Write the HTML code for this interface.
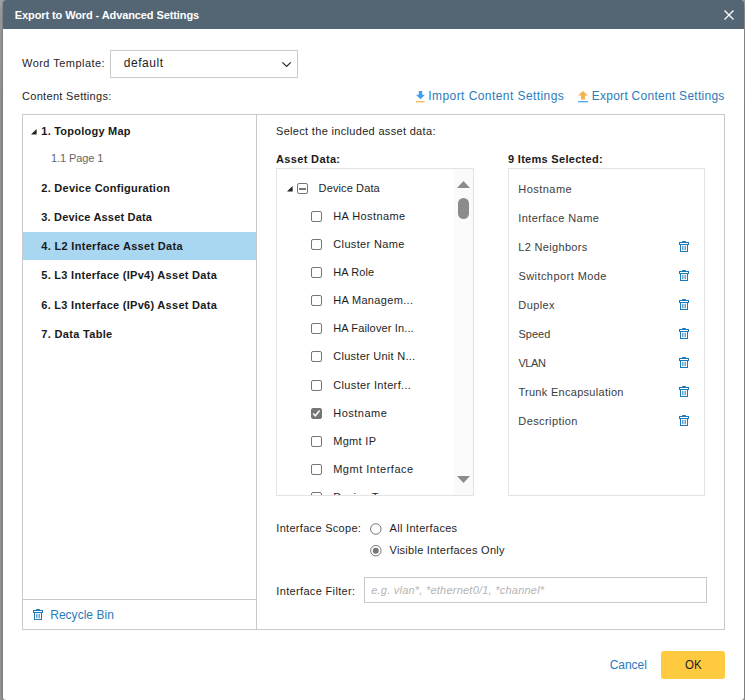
<!DOCTYPE html>
<html lang="en">
<head>
<meta charset="utf-8">
<title>Export to Word - Advanced Settings</title>
<style>
*{box-sizing:border-box}
html,body{margin:0;padding:0}
body{width:745px;height:700px;overflow:hidden;position:relative;background:linear-gradient(#a1a4a5 0,#a1a4a5 7px,#999c9e 8px,#95999a 30px,#8f9394 110px,#8f9394 100%);font-family:"Liberation Sans",sans-serif;font-size:11px;color:#1e1e1e}
ul,li,h1,h2,p{margin:0;padding:0;list-style:none;font-weight:400}
a{text-decoration:none;cursor:pointer}
button{margin:0;padding:0;border:0;font-family:inherit;cursor:pointer}
.a{position:absolute}
.t{position:absolute;height:20px;line-height:20px;white-space:pre;transform-origin:0 50%}
.dlg{left:3px;top:0;width:741px;height:700px;background:#fff;border-radius:3px;box-shadow:0 0 3px rgba(0,0,0,.38);overflow:hidden}
.hdr{left:0;top:0;width:741px;height:29px;background:#546673}
.panel{left:22px;top:114px;width:703px;height:516px;border:1px solid #c9c9c9;background:#fff}
.vdiv{left:256px;top:115px;width:1px;height:514px;background:#c9c9c9}
.hdiv{left:23px;top:599px;width:233px;height:1px;background:#c9c9c9}
.hl{left:23px;top:232px;width:233px;height:28px;background:#a9d6f0}
.sel{left:110px;top:50px;width:188px;height:28px;border:1px solid #c9c9c9;background:#fff}
.box{border:1px solid #e3e3e3;background:#fff}
.track{left:454px;top:169px;width:19px;height:326px;background:#fafafa}
.thumb{left:458px;top:198px;width:11px;height:21px;border-radius:6px;background:#8b8b8b}
.cb{width:11px;height:11px;border:1px solid #767676;border-radius:2px;background:#fff}
.cb.on{background:#767676}
.inp{left:364px;top:577px;width:343px;height:26px;border:1px solid #c9c9c9;background:#fff}
.ok{left:661px;top:651px;width:64px;height:28px;border-radius:3px;background:#ffc940}
.clipbox{left:277px;top:169px;width:177px;height:326px;overflow:hidden}
svg{position:absolute;overflow:visible}
</style>
</head>
<body>
<!-- modal dialog shell -->
<div class="a dlg" role="dialog"><div class="a hdr"></div></div>
<!-- title bar -->
<header>
<h1 class="t" style="left:14.8px;top:5.0px;font-size:11px;color:#fff;font-weight:700;letter-spacing:-0.10px">Export to Word - Advanced Settings</h1>
<svg style="left:724px;top:10px" width="10" height="10" viewBox="0 0 10 10"><path d="M0.5 0.5l9 9M9.5 0.5l-9 9" stroke="#fff" stroke-width="1.3" fill="none"/></svg>
</header>
<!-- template selector + import / export links -->
<section>
<label class="t" style="left:22.0px;top:53.0px;font-size:11px;color:#1e1e1e;letter-spacing:0.46px">Word Template:</label>
<div class="a sel"></div>
<span class="t" style="left:123.7px;top:53.0px;font-size:12px;color:#222;letter-spacing:0.57px">default</span>
<svg style="left:281px;top:62px" width="11" height="6" viewBox="0 0 11 6"><path d="M1.4 0.35L5.6 4.45 9.8 0.35" stroke="#2a2a2a" stroke-width="1.3" fill="none"/></svg>
<label class="t" style="left:22.0px;top:86.0px;font-size:11px;color:#1e1e1e;letter-spacing:0.31px">Content Settings:</label>
<svg style="left:416px;top:91px" width="9" height="12" viewBox="0 0 9 12"><path d="M2.8 0h3.4v3.8H9L4.5 8.3 0 3.8h2.8z" fill="#3f9ff0"/><rect x="0" y="10.1" width="8.6" height="1.2" fill="#f6b04a"/></svg>
<a class="t" style="left:428.3px;top:86.0px;font-size:12px;color:#2b7bba;letter-spacing:0.43px">Import Content Settings</a>
<svg style="left:578px;top:91px" width="10" height="12" viewBox="0 0 10 12"><path d="M5 0l5 4.6H7v3.9H3V4.6H0z" fill="#f7b250"/><rect x="0" y="10.1" width="10" height="1.2" fill="#3f9ff0"/></svg>
<a class="t" style="left:591.7px;top:86.0px;font-size:12px;color:#2b7bba;letter-spacing:0.27px">Export Content Settings</a>
</section>
<!-- content settings panel -->
<div class="a panel"></div><div class="a vdiv"></div><div class="a hdiv"></div><div class="a hl"></div>
<!-- left: content tree -->
<nav><ul>
<svg style="left:30.5px;top:128.5px" width="5.6" height="5.6" viewBox="0 0 5 5"><path d="M5 0v5H0z" fill="#222"/></svg>
<li class="t" style="left:41.3px;top:121.0px;font-size:11px;color:#1a1a1a;font-weight:700;letter-spacing:0.23px">1. Topology Map</li>
<li class="t" style="left:51.0px;top:148.0px;font-size:11px;color:#666;letter-spacing:-0.08px">1.1 Page 1</li>
<li class="t" style="left:41.3px;top:178.0px;font-size:11px;color:#1a1a1a;font-weight:700;letter-spacing:0.26px">2. Device Configuration</li>
<li class="t" style="left:41.3px;top:207.0px;font-size:11px;color:#1a1a1a;font-weight:700;letter-spacing:0.18px">3. Device Asset Data</li>
<li class="t" style="left:41.3px;top:236.0px;font-size:11px;color:#1a1a1a;font-weight:700;letter-spacing:0.31px">4. L2 Interface Asset Data</li>
<li class="t" style="left:41.3px;top:265.0px;font-size:11px;color:#1a1a1a;font-weight:700;letter-spacing:0.28px">5. L3 Interface (IPv4) Asset Data</li>
<li class="t" style="left:41.3px;top:295.0px;font-size:11px;color:#1a1a1a;font-weight:700;letter-spacing:0.28px">6. L3 Interface (IPv6) Asset Data</li>
<li class="t" style="left:41.3px;top:324.0px;font-size:11px;color:#1a1a1a;font-weight:700;letter-spacing:0.32px">7. Data Table</li>
</ul>
<svg style="left:33px;top:609px" width="10" height="11" viewBox="0 0 10 11"><path d="M3.2 0.6h3.6" stroke="#1b78b9" stroke-width="1.2" fill="none"/><rect x="0.5" y="1.5" width="9" height="2" fill="none" stroke="#1b78b9" stroke-width="1"/><rect x="1.5" y="3.5" width="7" height="7" fill="none" stroke="#1b78b9" stroke-width="1"/><path d="M3.5 4.8v4.4M5 4.8v4.4M6.5 4.8v4.4" stroke="#1b78b9" stroke-width="0.9" opacity=".75" fill="none"/></svg>
<a class="t" style="left:50.2px;top:605.0px;font-size:12px;color:#2b7bba;letter-spacing:0.03px">Recycle Bin</a>
</nav>
<!-- middle: asset data tree with checkboxes -->
<section>
<p class="t" style="left:276.0px;top:121.0px;font-size:11px;color:#1e1e1e;letter-spacing:0.32px">Select the included asset data<span>:</span></p>
<h2 class="t" style="left:276.0px;top:149.0px;font-size:11px;color:#1a1a1a;font-weight:700;letter-spacing:0.35px">Asset Data<span>:</span></h2>
<div class="a box" style="left:276px;top:168px;width:198px;height:328px"></div>
<div class="a track"></div><div class="a thumb"></div>
<svg style="left:457px;top:181px" width="13" height="7" viewBox="0 0 13 7"><path d="M6.5 0L13 7H0z" fill="#8b8b8b"/></svg>
<svg style="left:457px;top:476px" width="13" height="7" viewBox="0 0 13 7"><path d="M0 0h13L6.5 7z" fill="#8b8b8b"/></svg>
<svg style="left:286.5px;top:185.5px" width="5.6" height="5.6" viewBox="0 0 5 5"><path d="M5 0v5H0z" fill="#222"/></svg>
<ul class="a clipbox">
<span class="a cb" style="left:20px;top:14px"><i class="a" style="left:1px;top:4px;width:7px;height:2px;background:#767676"></i></span><li class="t" style="left:41.6px;top:9.0px;font-size:11px;color:#1e1e1e;letter-spacing:0.12px">Device Data</li>
<span class="a cb" style="left:34px;top:42px"></span><li class="t" style="left:56.2px;top:37.0px;font-size:11px;color:#1e1e1e;letter-spacing:0.41px">HA Hostname</li>
<span class="a cb" style="left:34px;top:70px"></span><li class="t" style="left:56.3px;top:65.0px;font-size:11px;color:#1e1e1e;letter-spacing:0.35px">Cluster Name</li>
<span class="a cb" style="left:34px;top:98px"></span><li class="t" style="left:56.2px;top:93.0px;font-size:11px;color:#1e1e1e;letter-spacing:0.08px">HA Role</li>
<span class="a cb" style="left:34px;top:126px"></span><li class="t" style="left:56.2px;top:121.0px;font-size:11px;color:#1e1e1e;letter-spacing:0.33px">HA Managem...</li>
<span class="a cb" style="left:34px;top:154px"></span><li class="t" style="left:56.2px;top:149.0px;font-size:11px;color:#1e1e1e;letter-spacing:0.14px">HA Failover In...</li>
<span class="a cb" style="left:34px;top:182px"></span><li class="t" style="left:56.3px;top:177.0px;font-size:11px;color:#1e1e1e;letter-spacing:0.26px">Cluster Unit N...</li>
<span class="a cb" style="left:34px;top:211px"></span><li class="t" style="left:56.3px;top:206.0px;font-size:11px;color:#1e1e1e;letter-spacing:0.34px">Cluster Interf...</li>
<span class="a cb on" style="left:34px;top:239px"><svg style="left:0;top:0" width="9" height="9" viewBox="0 0 9 9"><path d="M1.2 4.6l2.1 2.2L7.6 1.6" stroke="#fff" stroke-width="1.5" fill="none"/></svg></span><li class="t" style="left:56.2px;top:234.0px;font-size:11px;color:#1e1e1e;letter-spacing:0.51px">Hostname</li>
<span class="a cb" style="left:34px;top:267px"></span><li class="t" style="left:56.2px;top:262.0px;font-size:11px;color:#1e1e1e;letter-spacing:0.32px">Mgmt IP</li>
<span class="a cb" style="left:34px;top:295px"></span><li class="t" style="left:56.2px;top:290.0px;font-size:11px;color:#1e1e1e;letter-spacing:0.51px">Mgmt Interface</li>
<span class="a cb" style="left:34px;top:323px"></span><li class="t" style="left:56.2px;top:318.0px;font-size:11px;color:#1e1e1e;letter-spacing:0.28px">Device Type</li>
</ul>
</section>
<!-- right: selected items -->
<section>
<h2 class="t" style="left:508.0px;top:149.0px;font-size:11px;color:#1a1a1a;font-weight:700;letter-spacing:0.30px">9 Items Selected:</h2>
<div class="a box" style="left:508px;top:168px;width:197px;height:328px"></div>
<ul>
<li class="t" style="left:518.3px;top:178.7px;font-size:11px;color:#3c3c3c;letter-spacing:0.46px">Hostname</li>
<li class="t" style="left:518.3px;top:207.7px;font-size:11px;color:#3c3c3c;letter-spacing:0.41px">Interface Name</li>
<li class="t" style="left:518.3px;top:236.7px;font-size:11px;color:#3c3c3c;letter-spacing:0.32px">L2 Neighbors</li><svg style="left:679px;top:241px" width="10" height="11" viewBox="0 0 10 11"><path d="M3.2 0.6h3.6" stroke="#1b78b9" stroke-width="1.2" fill="none"/><rect x="0.5" y="1.5" width="9" height="2" fill="none" stroke="#1b78b9" stroke-width="1"/><rect x="1.5" y="3.5" width="7" height="7" fill="none" stroke="#1b78b9" stroke-width="1"/><path d="M3.5 4.8v4.4M5 4.8v4.4M6.5 4.8v4.4" stroke="#1b78b9" stroke-width="0.9" opacity=".75" fill="none"/></svg>
<li class="t" style="left:518.4px;top:265.8px;font-size:11px;color:#3c3c3c;letter-spacing:0.44px">Switchport Mode</li><svg style="left:679px;top:270px" width="10" height="11" viewBox="0 0 10 11"><path d="M3.2 0.6h3.6" stroke="#1b78b9" stroke-width="1.2" fill="none"/><rect x="0.5" y="1.5" width="9" height="2" fill="none" stroke="#1b78b9" stroke-width="1"/><rect x="1.5" y="3.5" width="7" height="7" fill="none" stroke="#1b78b9" stroke-width="1"/><path d="M3.5 4.8v4.4M5 4.8v4.4M6.5 4.8v4.4" stroke="#1b78b9" stroke-width="0.9" opacity=".75" fill="none"/></svg>
<li class="t" style="left:518.3px;top:294.8px;font-size:11px;color:#3c3c3c;letter-spacing:0.40px">Duplex</li><svg style="left:679px;top:299px" width="10" height="11" viewBox="0 0 10 11"><path d="M3.2 0.6h3.6" stroke="#1b78b9" stroke-width="1.2" fill="none"/><rect x="0.5" y="1.5" width="9" height="2" fill="none" stroke="#1b78b9" stroke-width="1"/><rect x="1.5" y="3.5" width="7" height="7" fill="none" stroke="#1b78b9" stroke-width="1"/><path d="M3.5 4.8v4.4M5 4.8v4.4M6.5 4.8v4.4" stroke="#1b78b9" stroke-width="0.9" opacity=".75" fill="none"/></svg>
<li class="t" style="left:518.4px;top:323.8px;font-size:11px;color:#3c3c3c;letter-spacing:0.05px">Speed</li><svg style="left:679px;top:328px" width="10" height="11" viewBox="0 0 10 11"><path d="M3.2 0.6h3.6" stroke="#1b78b9" stroke-width="1.2" fill="none"/><rect x="0.5" y="1.5" width="9" height="2" fill="none" stroke="#1b78b9" stroke-width="1"/><rect x="1.5" y="3.5" width="7" height="7" fill="none" stroke="#1b78b9" stroke-width="1"/><path d="M3.5 4.8v4.4M5 4.8v4.4M6.5 4.8v4.4" stroke="#1b78b9" stroke-width="0.9" opacity=".75" fill="none"/></svg>
<li class="t" style="left:518.4px;top:352.8px;font-size:11px;color:#3c3c3c;letter-spacing:-0.40px">VLAN</li><svg style="left:679px;top:357px" width="10" height="11" viewBox="0 0 10 11"><path d="M3.2 0.6h3.6" stroke="#1b78b9" stroke-width="1.2" fill="none"/><rect x="0.5" y="1.5" width="9" height="2" fill="none" stroke="#1b78b9" stroke-width="1"/><rect x="1.5" y="3.5" width="7" height="7" fill="none" stroke="#1b78b9" stroke-width="1"/><path d="M3.5 4.8v4.4M5 4.8v4.4M6.5 4.8v4.4" stroke="#1b78b9" stroke-width="0.9" opacity=".75" fill="none"/></svg>
<li class="t" style="left:518.4px;top:381.8px;font-size:11px;color:#3c3c3c;letter-spacing:0.29px">Trunk Encapsulation</li><svg style="left:679px;top:386px" width="10" height="11" viewBox="0 0 10 11"><path d="M3.2 0.6h3.6" stroke="#1b78b9" stroke-width="1.2" fill="none"/><rect x="0.5" y="1.5" width="9" height="2" fill="none" stroke="#1b78b9" stroke-width="1"/><rect x="1.5" y="3.5" width="7" height="7" fill="none" stroke="#1b78b9" stroke-width="1"/><path d="M3.5 4.8v4.4M5 4.8v4.4M6.5 4.8v4.4" stroke="#1b78b9" stroke-width="0.9" opacity=".75" fill="none"/></svg>
<li class="t" style="left:518.3px;top:410.9px;font-size:11px;color:#3c3c3c;letter-spacing:0.41px">Description</li><svg style="left:679px;top:415px" width="10" height="11" viewBox="0 0 10 11"><path d="M3.2 0.6h3.6" stroke="#1b78b9" stroke-width="1.2" fill="none"/><rect x="0.5" y="1.5" width="9" height="2" fill="none" stroke="#1b78b9" stroke-width="1"/><rect x="1.5" y="3.5" width="7" height="7" fill="none" stroke="#1b78b9" stroke-width="1"/><path d="M3.5 4.8v4.4M5 4.8v4.4M6.5 4.8v4.4" stroke="#1b78b9" stroke-width="0.9" opacity=".75" fill="none"/></svg>
</ul>
</section>
<!-- interface scope + filter -->
<section>
<label class="t" style="left:276.3px;top:518.0px;font-size:11px;color:#1e1e1e;letter-spacing:0.30px">Interface Scope:</label>
<svg style="left:369px;top:522px" width="14" height="14" viewBox="0 0 14 14"><circle cx="6.8" cy="7" r="5.25" fill="#fff" stroke="#767676" stroke-width="1"/></svg>
<label class="t" style="left:389.5px;top:518.0px;font-size:11px;color:#1e1e1e;letter-spacing:0.31px">All Interfaces</label>
<svg style="left:369px;top:544px" width="14" height="14" viewBox="0 0 14 14"><circle cx="6.8" cy="6.7" r="5.25" fill="#fff" stroke="#767676" stroke-width="1"/><circle cx="6.8" cy="6.7" r="3" fill="#767676"/></svg>
<label class="t" style="left:389.5px;top:540.0px;font-size:11px;color:#1e1e1e;letter-spacing:0.26px">Visible Interfaces Only</label>
<label class="t" style="left:276.3px;top:580.5px;font-size:11px;color:#1e1e1e;letter-spacing:0.34px">Interface Filter:</label>
<div class="a inp"></div>
<span class="t" style="left:371.2px;top:580.0px;font-size:11px;color:#b4b4b4;font-style:italic;letter-spacing:0.23px">e.g. vlan*, *ethernet0/1, *channel*</span>
</section>
<!-- footer buttons -->
<footer>
<a class="t" style="left:609.7px;top:654.8px;font-size:12px;color:#2b7bba;letter-spacing:-0.04px">Cancel</a>
<button class="a ok" type="button"></button>
<span class="t" style="left:684.9px;top:654.8px;font-size:12px;color:#222;transform:scaleX(0.959)">OK</span>
</footer>
</body>
</html>
